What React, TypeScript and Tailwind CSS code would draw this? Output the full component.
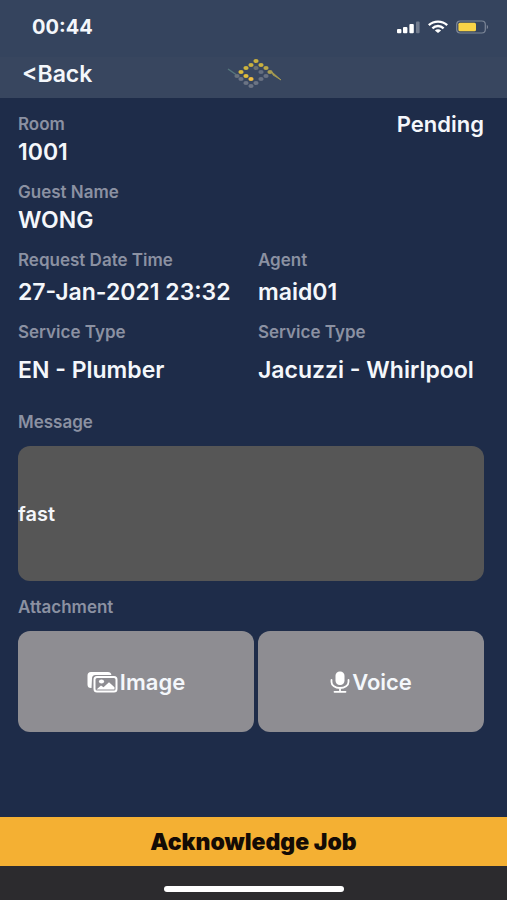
import { type FC, type ReactNode } from "react";

interface FieldProps {
    label: string;
    value: string;
    gap?: string;
}

const Field: FC<FieldProps> = ({ label, value, gap = "gap-1" }) => (
    <div className={`flex flex-col ${gap}`}>
        <dt className="text-[17px] leading-5 font-semibold text-[#8b91a2]">{label}</dt>
        <dd className="text-[23px] leading-7 font-semibold whitespace-nowrap">{value}</dd>
    </div>
);

const SignalIcon: FC = () => (
    <svg width="24" height="14" viewBox="0 0 24 14" fill="#fff" aria-hidden="true">
        <rect x="1" y="9" width="4.4" height="4.2" rx="1" />
        <rect x="7" y="7" width="4.4" height="6.2" rx="1" />
        <rect x="13.4" y="4" width="4.4" height="9.2" rx="1" />
        <rect x="20" y="1.5" width="3.6" height="11.7" rx="1" opacity="0.3" />
    </svg>
);

const WifiIcon: FC = () => (
    <svg width="20" height="14" viewBox="0 0 20 14" fill="none" stroke="#fff" strokeWidth="2.4" aria-hidden="true">
        <path d="M.8 5.2C6 .4 14 .4 19.2 5.2" />
        <path d="M4.4 8.3c3.2-3 8-3 11.2 0" />
        <path d="M10 13 6.9 10.4c1.8-1.5 4.4-1.5 6.2 0Z" fill="#fff" stroke="none" />
    </svg>
);

const BatteryIcon: FC = () => (
    <svg width="33" height="14" viewBox="0 0 33 14" aria-hidden="true">
        <rect x="0.7" y="1" width="28.6" height="12" rx="3.5" fill="none" stroke="#7d8798" strokeWidth="1.2" />
        <rect x="2.4" y="2.8" width="17.6" height="8.4" rx="1.5" fill="#f8d347" />
        <path d="M30.8 5v4c1.6-.4 1.6-3.6 0-4Z" fill="#7d8798" />
    </svg>
);

const LOGO_DOTS: [number, number, string][] = [
    [26, 3, "#c9b03f"],
    [21, 7, "#c9b03f"],
    [31, 7, "#c9b03f"],
    [16, 10, "#cdb43e"],
    [26, 10, "#6b6f70"],
    [36, 10, "#bba849"],
    [11, 14, "#d9b93a"],
    [31, 14, "#646e80"],
    [40, 14, "#a99d50"],
    [16, 18, "#e0bd3c"],
    [36, 18, "#687182"],
    [7, 18, "#68727d"],
    [11, 21, "#6b7484"],
    [21, 21, "#efbc42"],
    [31, 21, "#687182"],
    [16, 25, "#6b7484"],
    [26, 25, "#6b7484"],
    [21, 28, "#6b7484"],
];

const Logo: FC = () => (
    <svg width="54" height="31" viewBox="-3 0 54 31" role="img" aria-label="Logo">
        <path d="m-2 11 8 5.5" stroke="#55767c" strokeWidth="1.5" />
        <path d="m42 14 9 8-8-5Z" fill="#a99d50" stroke="#a99d50" strokeWidth="0.8" />
        {LOGO_DOTS.map(([x, y, fill]) => (
            <ellipse key={`${x}-${y}`} cx={x} cy={y} rx="2.6" ry="2" fill={fill} />
        ))}
    </svg>
);

const ImagesIcon: FC = () => (
    <svg width="31" height="22" viewBox="0 0 31 22" aria-hidden="true">
        <path
            d="M4.5 17H4a3.5 3.5 0 0 1-3.5-3.5v-9A3.5 3.5 0 0 1 4 1h17a3.5 3.5 0 0 1 3.4 3H8.5A3.5 3.5 0 0 0 5 7.5Z"
            fill="#fff"
        />
        <rect x="7.5" y="6" width="22" height="14.5" rx="2.5" fill="none" stroke="#fff" strokeWidth="2" />
        <ellipse cx="14.5" cy="10.6" rx="2.6" ry="2" fill="#fff" />
        <path d="m9.5 18.5 4.5-4 2.5 1.8 5.5-5 5.5 5v2.2Z" fill="#fff" />
    </svg>
);

const MicIcon: FC = () => (
    <svg width="20" height="22" viewBox="0 0 20 22" fill="none" stroke="#fff" strokeWidth="1.8" strokeLinecap="round" aria-hidden="true">
        <rect x="5.5" y="0.5" width="9" height="13.5" rx="4.2" fill="#fff" stroke="none" />
        <path d="M1.5 9v2c0 3.5 3.6 6 8.5 6s8.5-2.5 8.5-6V9M10 17v3.5M4.5 20.8h11" />
    </svg>
);

const AttachmentButton: FC<{ icon: ReactNode; children: ReactNode }> = ({ icon, children }) => (
    <button
        type="button"
        className="flex h-[101px] items-center justify-center gap-[2px] rounded-xl bg-[#8e8d92] text-[22px] leading-7 font-semibold"
    >
        {icon}
        {children}
    </button>
);

const App: FC = () => {
    return (
        <div className="flex min-h-screen flex-col bg-[#1e2c49] font-['Inter','Liberation_Sans',sans-serif] text-[#f4f7fb]">
            <header className="bg-[#35445e]">
                <div className="flex h-[57px] items-center justify-between pr-[18px] pb-1 pl-8">
                    <time className="text-[20px] leading-7 font-bold">00:44</time>
                    <div className="flex items-center gap-2">
                        <SignalIcon />
                        <WifiIcon />
                        <BatteryIcon />
                    </div>
                </div>
                <nav className="grid h-[41px] grid-cols-[1fr_auto_1fr] items-center bg-[#38465f] px-[22px] pb-2">
                    <a href="#back" className="text-[23px] leading-7 font-semibold">
                        &lt;Back
                    </a>
                    <Logo />
                </nav>
            </header>

            <main className="flex flex-1 flex-col pt-4 pr-[23px] pb-20 pl-[18px]">
                <dl className="flex flex-col gap-4">
                    <div className="flex items-start justify-between">
                        <Field label="Room" value="1001" />
                        <span className="text-[22px] leading-5 font-semibold">Pending</span>
                    </div>
                    <Field label="Guest Name" value="WONG" />
                    <div className="grid grid-cols-[236fr_226fr] gap-1">
                        <Field label="Request Date Time" value="27-Jan-2021 23:32" gap="gap-2" />
                        <Field label="Agent" value="maid01" gap="gap-2" />
                    </div>
                    <div className="grid grid-cols-[236fr_226fr] gap-1">
                        <Field label="Service Type" value="EN - Plumber" gap="gap-[14px]" />
                        <Field label="Service Type" value="Jacuzzi - Whirlpool" gap="gap-[14px]" />
                    </div>
                </dl>

                <label htmlFor="message" className="mt-7 text-[17px] leading-5 font-semibold text-[#8b91a2]">
                    Message
                </label>
                <input
                    id="message"
                    type="text"
                    defaultValue="fast"
                    className="mt-[14px] h-[135px] w-full rounded-xl bg-[#565656] text-[20px] font-semibold outline-none"
                />

                <h2 className="mt-4 text-[17px] leading-5 font-semibold text-[#8b91a2]">Attachment</h2>
                <div className="mt-[14px] grid grid-cols-[236fr_226fr] gap-1">
                    <AttachmentButton icon={<ImagesIcon />}>Image</AttachmentButton>
                    <AttachmentButton icon={<MicIcon />}>Voice</AttachmentButton>
                </div>
            </main>

            <footer className="bg-[#2c2b2e]">
                <button type="button" className="h-[49px] w-full bg-[#f4b033] text-[23px] leading-7 font-black text-[#140b05]">
                    Acknowledge Job
                </button>
                <div className="flex h-[34px] items-center justify-center pt-3">
                    <div className="h-[6px] w-[180px] rounded-full bg-white" />
                </div>
            </footer>
        </div>
    );
};

export default App;
